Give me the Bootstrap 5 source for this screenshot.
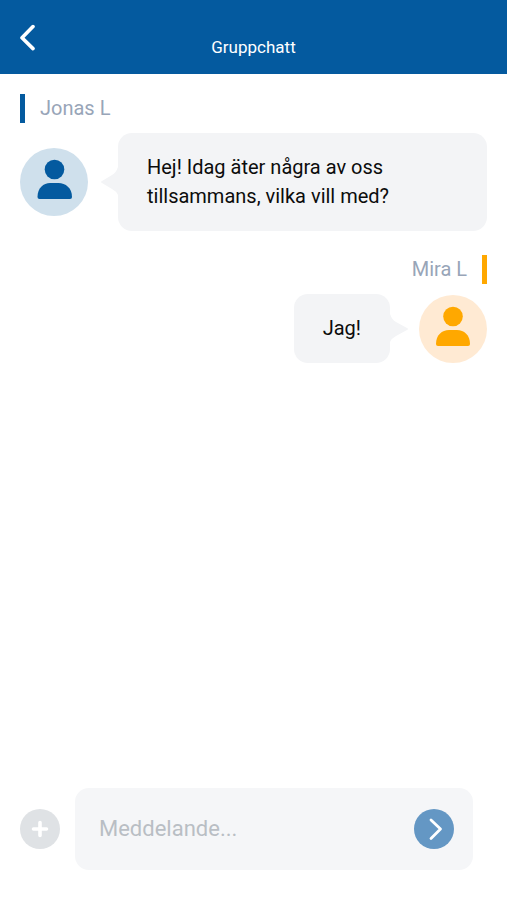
<!DOCTYPE html>
<html lang="sv">
<head>
<meta charset="utf-8">
<meta name="viewport" content="width=device-width, initial-scale=1">
<title>Gruppchatt</title>
<link href="https://cdn.jsdelivr.net/npm/bootstrap@5.3.0/dist/css/bootstrap.min.css" rel="stylesheet">
<style>
  body { font-family: Roboto, "Liberation Sans", sans-serif; font-size: 20px; line-height: 29px; color: #0c0c0c; background: #fff; }
  .chat-header { display: grid; grid-template-columns: 1fr auto 1fr; background: #045a9f; height: 74px; padding: 0 20px; }
  .chat-title { font-size: 17px; line-height: 20px; padding-top: 37px; }
  .chat-back { padding-top: 24px; }
  .chat-main { padding: 20px; }
  .sender { color: #98a5b8; gap: 15px; margin-bottom: 10px; }
  .sender-bar { width: 5px; height: 29px; background: #045a9f; }
  .mine .sender-bar { background: #ffa800; }
  .message { margin-bottom: 24px; }
  .avatar { width: 68px; height: 68px; background: #cfe0ec; color: #045a9f; }
  .mine .avatar { background: #ffead3; color: #ffa800; }
  .tail { color: #f3f4f6; }
  .theirs .tail { margin-left: 12px; }
  .mine .tail { margin-right: 10px; }
  .bubble { background: #f3f4f6; border-radius: 14px; padding: 20px 29px; }
  .composer { padding: 0 34px 30px 20px; gap: 15px; }
  .round-btn { width: 40px; height: 40px; background: #dfe2e5; }
  .send-btn { background: #6497c4; }
  .entry { background: #f5f6f8; border-radius: 14px; height: 82px; padding: 0 19px 0 24px; }
  .entry input { font-size: 22px; line-height: 30px; min-width: 0; color: #111; outline-offset: 4px; }
  .entry input::placeholder { color: #b9bec4; opacity: 1; }
</style>
<script src="https://cdn.jsdelivr.net/npm/bootstrap@5.3.0/dist/js/bootstrap.bundle.min.js" defer></script>
</head>
<body>
<div class="d-flex flex-column min-vh-100">
  <header class="chat-header text-white">
    <a href="#" class="chat-back text-white lh-1" aria-label="Tillbaka">
      <svg class="d-block" width="16" height="28" viewBox="0 0 16 28" fill="none" stroke="currentColor" stroke-width="3.6" stroke-linecap="round" stroke-linejoin="round" aria-hidden="true"><path d="M13 2.6 2 13.8 13 24.6"/></svg>
    </a>
    <h1 class="chat-title fw-normal m-0">Gruppchatt</h1>
  </header>

  <main class="chat-main flex-grow-1">
    <section class="message theirs">
      <div class="sender d-flex align-items-center"><span class="sender-bar"></span><span>Jonas L</span></div>
      <div class="d-flex align-items-center">
        <div class="avatar rounded-circle flex-shrink-0">
          <svg class="d-block" width="68" height="68" viewBox="0 0 68 68" fill="currentColor" aria-hidden="true"><circle cx="34.5" cy="21.5" r="9.8"/><path d="M17.5 49C17.5 40 23.5 35 30 35H38.5C45.5 35 52 40 52 49Q52 51 50 51H19.5Q17.5 51 17.5 49Z"/></svg>
        </div>
        <svg class="tail flex-shrink-0" width="18" height="30" viewBox="0 0 18 30" fill="currentColor" aria-hidden="true"><path d="M18 0V28Q16 24 12 22L2 16Q0 15 2 14L12 8Q16 6 18 0Z"/></svg>
        <div class="bubble flex-grow-1">Hej! Idag äter några av oss<br>tillsammans, vilka vill med?</div>
      </div>
    </section>

    <section class="message mine">
      <div class="sender d-flex align-items-center justify-content-end"><span>Mira L</span><span class="sender-bar"></span></div>
      <div class="d-flex align-items-center justify-content-end">
        <div class="bubble">Jag!</div>
        <svg class="tail flex-shrink-0" width="19" height="30" viewBox="0 0 19 30" fill="currentColor" aria-hidden="true"><path d="M0 0V28Q2 24 6 22L17 16Q19 15 17 14L6 8Q2 6 0 0Z"/></svg>
        <div class="avatar rounded-circle flex-shrink-0">
          <svg class="d-block" width="68" height="68" viewBox="0 0 68 68" fill="currentColor" aria-hidden="true"><circle cx="34" cy="21.5" r="9.8"/><path d="M17 49C17 40 23 35 30 35H38C45 35 51 40 51 49Q51 51 49 51H19Q17 51 17 49Z"/></svg>
        </div>
      </div>
    </section>
  </main>

  <form class="composer d-flex align-items-center">
    <button type="button" class="round-btn btn rounded-circle border-0 p-0 flex-shrink-0" aria-label="Lägg till">
      <svg class="d-block" width="40" height="40" viewBox="0 0 40 40" fill="none" stroke="#fff" stroke-width="3.6" stroke-linecap="round" aria-hidden="true"><path d="M20 13.5V26.5M13.5 20H26.5"/></svg>
    </button>
    <div class="entry d-flex align-items-center flex-grow-1">
      <input type="text" class="flex-grow-1 border-0 bg-transparent p-0" placeholder="Meddelande..." aria-label="Meddelande">
      <button type="submit" class="round-btn send-btn btn rounded-circle border-0 p-0 flex-shrink-0" aria-label="Skicka">
        <svg class="d-block" width="40" height="40" viewBox="0 0 40 40" fill="none" stroke="#fff" stroke-width="2.8" stroke-linecap="round" stroke-linejoin="round" aria-hidden="true"><path d="M17 11 26.5 20 17 29.5"/></svg>
      </button>
    </div>
  </form>
</div>
</body>
</html>
